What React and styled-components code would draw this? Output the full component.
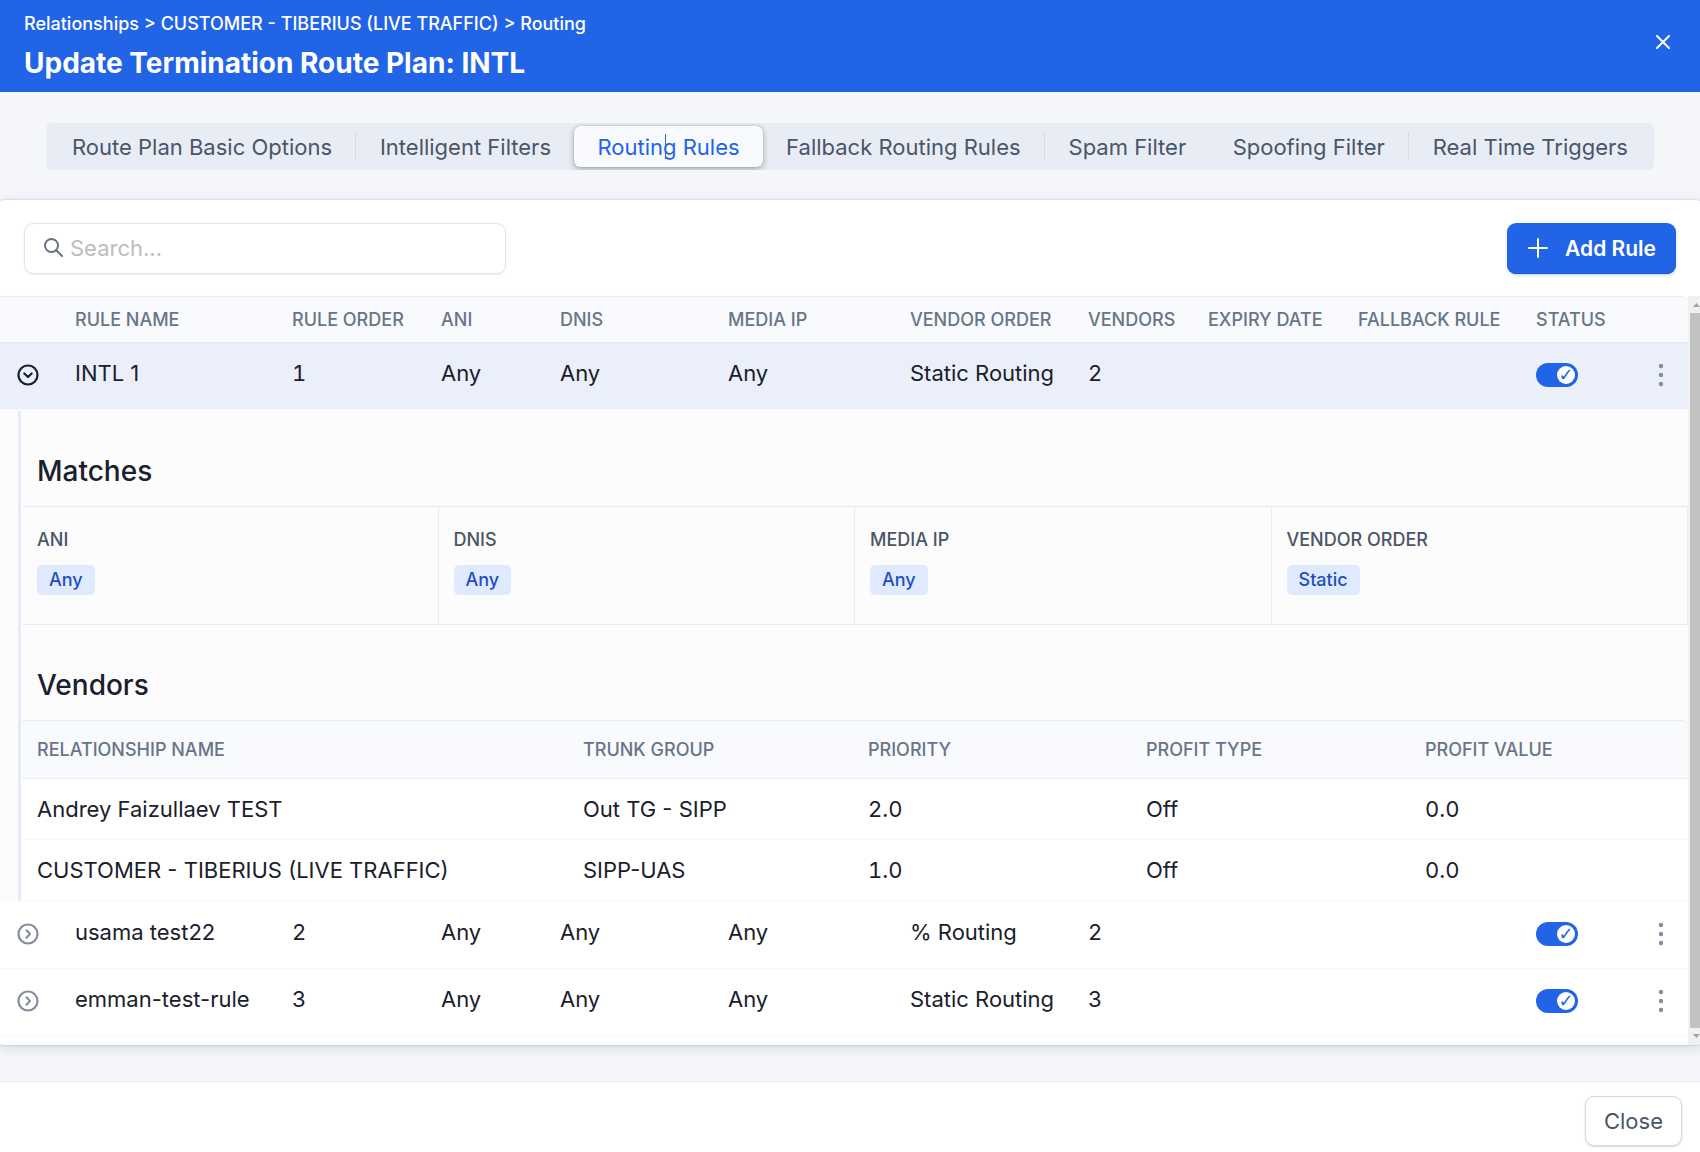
import React, { useState } from "react";
import styled, { createGlobalStyle, css } from "styled-components";

const GlobalStyle = createGlobalStyle`
  *, *::before, *::after {
    box-sizing: border-box;
  }
  body {
    margin: 0;
    background: #f4f6fa;
  }
  body, button, input {
    font-family: Inter, "Liberation Sans", sans-serif;
  }
`;

const Page = styled.div`
  display: flex;
  flex-direction: column;
  min-height: 100vh;
  overflow-x: hidden;
  font-size: 22px;
  line-height: 30px;
  color: #1a202c;
`;

const Header = styled.header`
  display: flex;
  align-items: flex-start;
  justify-content: space-between;
  padding: 10px 24px 4px;
  background: #2264e6;
  color: #fff;
`;

const Breadcrumb = styled.nav`
  font-size: 18px;
  line-height: 28px;
  font-weight: 500;
  a {
    color: inherit;
    text-decoration: none;
  }
`;

const Title = styled.h1`
  margin: 0;
  font-size: 28px;
  line-height: 50px;
  font-weight: 700;
`;

const IconButton = styled.button`
  display: inline-flex;
  align-items: center;
  justify-content: center;
  width: 26px;
  height: 26px;
  padding: 0;
  border: 0;
  background: none;
  color: ${({ $color }) => $color || "#858e9f"};
  cursor: pointer;
`;

const HeaderClose = styled(IconButton)`
  height: 64px;
`;

const Tabs = styled.div`
  display: flex;
  align-items: center;
  justify-content: space-between;
  height: 47px;
  margin: 31px 46px 30px;
  padding: 3px;
  border-radius: 6px;
  background: #e8edf5;
  overflow: hidden;
`;

const Tab = styled.button`
  position: relative;
  height: 41px;
  padding: 0 23px;
  border: 0;
  border-radius: 6px;
  background: none;
  color: #4a5568;
  font-size: 22px;
  font-weight: 400;
  white-space: nowrap;
  ${({ $active }) =>
    $active &&
    css`
      background: #f8fafd;
      color: #2264e6;
      box-shadow: 0 0 1px rgba(0, 0, 0, 0.4), 0 2px 6px rgba(0, 0, 0, 0.3);
      &::after {
        content: "";
        position: absolute;
        top: 8px;
        left: 48%;
        width: 1px;
        height: 25px;
        background: #2264e6;
      }
    `}
`;

const TabLine = styled.span`
  width: 1px;
  height: 29px;
  background: #d3dae6;
`;

const Card = styled.main`
  margin: 0 -5px;
  border-radius: 10px;
  background: #fff;
  box-shadow: 0 0 1px 1px rgba(30, 40, 80, 0.08), 0 3px 12px rgba(30, 40, 80, 0.14);
  overflow: hidden;
`;

const Toolbar = styled.div`
  display: flex;
  align-items: center;
  justify-content: space-between;
  height: 96px;
  padding: 0 29px;
`;

const SearchBox = styled.label`
  display: flex;
  align-items: center;
  gap: 5px;
  width: 482px;
  height: 51px;
  padding: 0 18px;
  border: 1px solid #e1e4ea;
  border-radius: 9px;
  box-shadow: 0 1px 2px rgba(0, 0, 0, 0.08);
  color: #667085;
  input {
    flex: 1;
    min-width: 0;
    padding: 0;
    border: 0;
    outline: 0;
    font-size: 22px;
    background: none;
  }
  input::placeholder {
    color: #bdbdbd;
  }
`;

const AddButton = styled.button`
  display: flex;
  align-items: center;
  gap: 16px;
  height: 51px;
  padding: 0 20px;
  border: 0;
  border-radius: 9px;
  background: #2264e6;
  color: #fff;
  font-size: 21px;
  font-weight: 600;
  box-shadow: inset 0 -1px 0 #1b57cc, 0 2px 3px rgba(34, 100, 230, 0.2);
`;

const TableArea = styled.div`
  display: flex;
`;

const TablePane = styled.div`
  flex: 1;
  min-width: 0;
  padding-bottom: 9px;
`;

const Table = styled.table`
  width: 100%;
  table-layout: fixed;
  border-collapse: separate;
  border-spacing: 0;
`;

const Th = styled.th`
  height: ${({ $tall }) => ($tall ? 59 : 47)}px;
  padding: 0 0 0 15px;
  border-top: 1px solid #e6ebf5;
  border-bottom: 1px solid #e6ebf5;
  background: #f8fafd;
  color: #697586;
  font-size: 18px;
  font-weight: 500;
  text-align: left;
  white-space: nowrap;
  &:last-child {
    border-top-right-radius: 6px;
  }
`;

const Td = styled.td`
  height: ${({ $short }) => ($short ? 61 : 67)}px;
  padding: 15px 0 0 15px;
  border-bottom: 1px solid #f7f8fb;
  background: ${({ $open }) => ($open ? "#ebeffa" : "#fff")};
  font-variant-numeric: ${({ $numeric }) => ($numeric ? "tabular-nums" : "normal")};
  vertical-align: top;
  white-space: nowrap;
`;

const IconTd = styled(Td)`
  padding: 0 0 2px;
  vertical-align: middle;
  text-align: center;
  line-height: 0;
`;

const SwitchTd = styled(IconTd)`
  padding-left: 15px;
  text-align: left;
`;

const DetailTd = styled.td`
  padding: 1px 0 1px 23px;
  background: #fcfcfc;
`;

const Detail = styled.div`
  padding-left: 1px;
  border-left: 3px solid #e6ecf6;
`;

const SectionTitle = styled.h2`
  margin: 0;
  padding: 42px 0 17px 15px;
  font-size: 28px;
  line-height: 36px;
  font-weight: 500;
`;

const Matches = styled.div`
  display: grid;
  grid-template-columns: repeat(4, 1fr);
  border-top: 1px solid #e6ebf7;
  border-bottom: 1px solid #e6ebf7;
`;

const Match = styled.div`
  height: 117px;
  padding: 18px 15px;
  border-right: 1px solid #e6ebf7;
`;

const MatchLabel = styled.div`
  margin-bottom: 9px;
  color: #4a5568;
  font-size: 18px;
  line-height: 29px;
  font-weight: 500;
`;

const Chip = styled.span`
  display: inline-block;
  padding: 0 12px;
  border-radius: 5px;
  background: #e0eaff;
  color: #1d4fbf;
  font-size: 18px;
  font-weight: 500;
`;

const Switch = styled.input`
  appearance: none;
  width: 42px;
  height: 24px;
  margin: 0;
  border-radius: 12px;
  background: #b8c0cc;
  cursor: pointer;
  &::before {
    content: "";
    display: block;
    width: 18px;
    height: 18px;
    margin: 3px;
    border-radius: 9px;
    background: #fff;
  }
  &:checked {
    background: #2264e6;
  }
  &:checked::before {
    content: "✓";
    margin-left: 21px;
    color: #2264e6;
    font: bold 18px/18px "DejaVu Sans", sans-serif;
    text-align: center;
  }
`;

const ScrollBar = styled.div`
  display: flex;
  flex-direction: column;
  align-items: center;
  width: 17px;
  background: #f1f1f1;
`;

const ScrollArrow = styled.svg`
  width: 17px;
  height: 17px;
  fill: #a3a3a3;
`;

const ScrollThumb = styled.div`
  flex: 1;
  width: 13px;
  background: #c1c1c1;
`;

const Footer = styled.footer`
  display: flex;
  align-items: center;
  justify-content: flex-end;
  height: 71px;
  margin-top: auto;
  padding: 8px 18px 0;
  border-top: 1px solid #e6eaf1;
  background: #fff;
`;

const CloseButton = styled.button`
  height: 50px;
  padding: 0 18px;
  border: 1px solid #d5d8de;
  border-radius: 9px;
  background: #fff;
  color: #4a5568;
  font-size: 22px;
  font-weight: 400;
  box-shadow: 0 1px 2px rgba(0, 0, 0, 0.15);
`;

const tabs = [
  { name: "Route Plan Basic Options", line: true },
  { name: "Intelligent Filters" },
  { name: "Routing Rules" },
  { name: "Fallback Routing Rules", line: true },
  { name: "Spam Filter" },
  { name: "Spoofing Filter", line: true },
  { name: "Real Time Triggers" },
];

const columns = [
  { name: "", width: 65 },
  { name: "RULE NAME", width: 217 },
  { name: "RULE ORDER", width: 149 },
  { name: "ANI", width: 119 },
  { name: "DNIS", width: 168 },
  { name: "MEDIA IP", width: 182 },
  { name: "VENDOR ORDER", width: 178 },
  { name: "VENDORS", width: 120 },
  { name: "EXPIRY DATE", width: 150 },
  { name: "FALLBACK RULE", width: 178 },
  { name: "STATUS", width: 112 },
  { name: "", width: 55 },
];

const vendorColumns = [
  { name: "RELATIONSHIP NAME", width: 546 },
  { name: "TRUNK GROUP", width: 285 },
  { name: "PRIORITY", width: 278, numeric: true },
  { name: "PROFIT TYPE", width: 279 },
  { name: "PROFIT VALUE", width: 278, numeric: true },
];

const rules = [
  { name: "INTL 1", order: 1, routing: "Static Routing", vendors: 2 },
  { name: "usama test22", order: 2, routing: "% Routing", vendors: 2 },
  { name: "emman-test-rule", order: 3, routing: "Static Routing", vendors: 3 },
];

const matches = [
  { label: "ANI", value: "Any" },
  { label: "DNIS", value: "Any" },
  { label: "MEDIA IP", value: "Any" },
  { label: "VENDOR ORDER", value: "Static" },
];

const vendors = [
  ["Andrey Faizullaev TEST", "Out TG - SIPP", "2.0", "Off", "0.0"],
  ["CUSTOMER - TIBERIUS (LIVE TRAFFIC)", "SIPP-UAS", "1.0", "Off", "0.0"],
];

const ExpandIcon = ({ open }) => (
  <svg width="22" height="22" viewBox="0 0 22 22" fill="none" stroke="currentColor" strokeWidth="2.2">
    <circle cx="11" cy="11" r="9.5" />
    <path d={open ? "M7.3 9.5 11 13l3.7-3.5" : "M9.5 7.3 13 11l-3.5 3.7"} strokeLinecap="round" strokeLinejoin="round" />
  </svg>
);

const Kebab = () => (
  <svg width="6" height="24" viewBox="0 0 6 24" fill="currentColor">
    <circle cx="3" cy="3" r="2.2" />
    <circle cx="3" cy="12" r="2.2" />
    <circle cx="3" cy="21" r="2.2" />
  </svg>
);

const VendorTable = () => (
  <Table>
    <colgroup>
      {vendorColumns.map((col) => (
        <col key={col.name} width={col.width} />
      ))}
    </colgroup>
    <thead>
      <tr>
        {vendorColumns.map((col) => (
          <Th $tall key={col.name}>
            {col.name}
          </Th>
        ))}
      </tr>
    </thead>
    <tbody>
      {vendors.map((row) => (
        <tr key={row[0]}>
          {row.map((value, i) => (
            <Td $short $numeric={vendorColumns[i].numeric} key={i}>
              {value}
            </Td>
          ))}
        </tr>
      ))}
    </tbody>
  </Table>
);

const RuleDetail = () => (
  <Detail>
    <SectionTitle>Matches</SectionTitle>
    <Matches>
      {matches.map((match) => (
        <Match key={match.label}>
          <MatchLabel>{match.label}</MatchLabel>
          <Chip>{match.value}</Chip>
        </Match>
      ))}
    </Matches>
    <SectionTitle>Vendors</SectionTitle>
    <VendorTable />
  </Detail>
);

const App = () => {
  const [activeTab, setActiveTab] = useState("Routing Rules");
  const [openRule, setOpenRule] = useState(1);

  return (
    <Page>
      <GlobalStyle />
      <Header>
        <div>
          <Breadcrumb>
            <a href="#relationships">Relationships</a> &gt;{" "}
            <a href="#customer">CUSTOMER - TIBERIUS (LIVE TRAFFIC)</a> &gt;{" "}
            <a href="#routing">Routing</a>
          </Breadcrumb>
          <Title>Update Termination Route Plan: INTL</Title>
        </div>
        <HeaderClose $color="#fff" aria-label="Close panel">
          <svg width="14" height="14" viewBox="0 0 14 14" stroke="currentColor" strokeWidth="2" strokeLinecap="round">
            <path d="M1 1l12 12M13 1 1 13" />
          </svg>
        </HeaderClose>
      </Header>

      <Tabs role="tablist">
        {tabs.map((tab) => (
          <React.Fragment key={tab.name}>
            <Tab
              role="tab"
              $active={tab.name === activeTab}
              aria-selected={tab.name === activeTab}
              onClick={() => setActiveTab(tab.name)}
            >
              {tab.name}
            </Tab>
            {tab.line && <TabLine />}
          </React.Fragment>
        ))}
      </Tabs>

      <Card>
        <Toolbar>
          <SearchBox>
            <svg width="22" height="22" viewBox="0 0 22 22" fill="none" stroke="currentColor" strokeWidth="2">
              <circle cx="8.5" cy="8.5" r="6.5" />
              <path d="M13 13l6 6" strokeLinecap="round" />
            </svg>
            <input type="text" placeholder="Search..." aria-label="Search" />
          </SearchBox>
          <AddButton>
            <svg width="22" height="22" viewBox="0 0 22 22" stroke="currentColor" strokeWidth="2" strokeLinecap="round">
              <path d="M11 2v18M2 11h18" />
            </svg>
            Add Rule
          </AddButton>
        </Toolbar>

        <TableArea>
          <TablePane>
            <Table>
              <colgroup>
                {columns.map((col, i) => (
                  <col key={i} width={col.width} />
                ))}
              </colgroup>
              <thead>
                <tr>
                  {columns.map((col, i) => (
                    <Th key={i}>{col.name}</Th>
                  ))}
                </tr>
              </thead>
              <tbody>
                {rules.map((rule) => {
                  const open = rule.order === openRule;
                  return (
                    <React.Fragment key={rule.order}>
                      <tr>
                        <IconTd $open={open}>
                          <IconButton
                            $color={open && "#1a202c"}
                            aria-label={`Toggle ${rule.name}`}
                            aria-expanded={open}
                            onClick={() => setOpenRule(open ? null : rule.order)}
                          >
                            <ExpandIcon open={open} />
                          </IconButton>
                        </IconTd>
                        <Td $open={open}>{rule.name}</Td>
                        <Td $open={open} $numeric>{rule.order}</Td>
                        <Td $open={open}>Any</Td>
                        <Td $open={open}>Any</Td>
                        <Td $open={open}>Any</Td>
                        <Td $open={open}>{rule.routing}</Td>
                        <Td $open={open} $numeric>{rule.vendors}</Td>
                        <Td $open={open} />
                        <Td $open={open} />
                        <SwitchTd $open={open}>
                          <Switch type="checkbox" defaultChecked aria-label={`${rule.name} status`} />
                        </SwitchTd>
                        <IconTd $open={open}>
                          <IconButton aria-label={`${rule.name} actions`}>
                            <Kebab />
                          </IconButton>
                        </IconTd>
                      </tr>
                      {open && (
                        <tr>
                          <DetailTd colSpan={columns.length}>
                            <RuleDetail />
                          </DetailTd>
                        </tr>
                      )}
                    </React.Fragment>
                  );
                })}
              </tbody>
            </Table>
          </TablePane>
          <ScrollBar aria-hidden="true">
            <ScrollArrow viewBox="0 0 17 17">
              <path d="M5 11h7L8.5 7z" />
            </ScrollArrow>
            <ScrollThumb />
            <ScrollArrow viewBox="0 0 17 17">
              <path d="M5 6h7l-3.5 4z" />
            </ScrollArrow>
          </ScrollBar>
        </TableArea>
      </Card>

      <Footer>
        <CloseButton>Close</CloseButton>
      </Footer>
    </Page>
  );
};

export default App;
